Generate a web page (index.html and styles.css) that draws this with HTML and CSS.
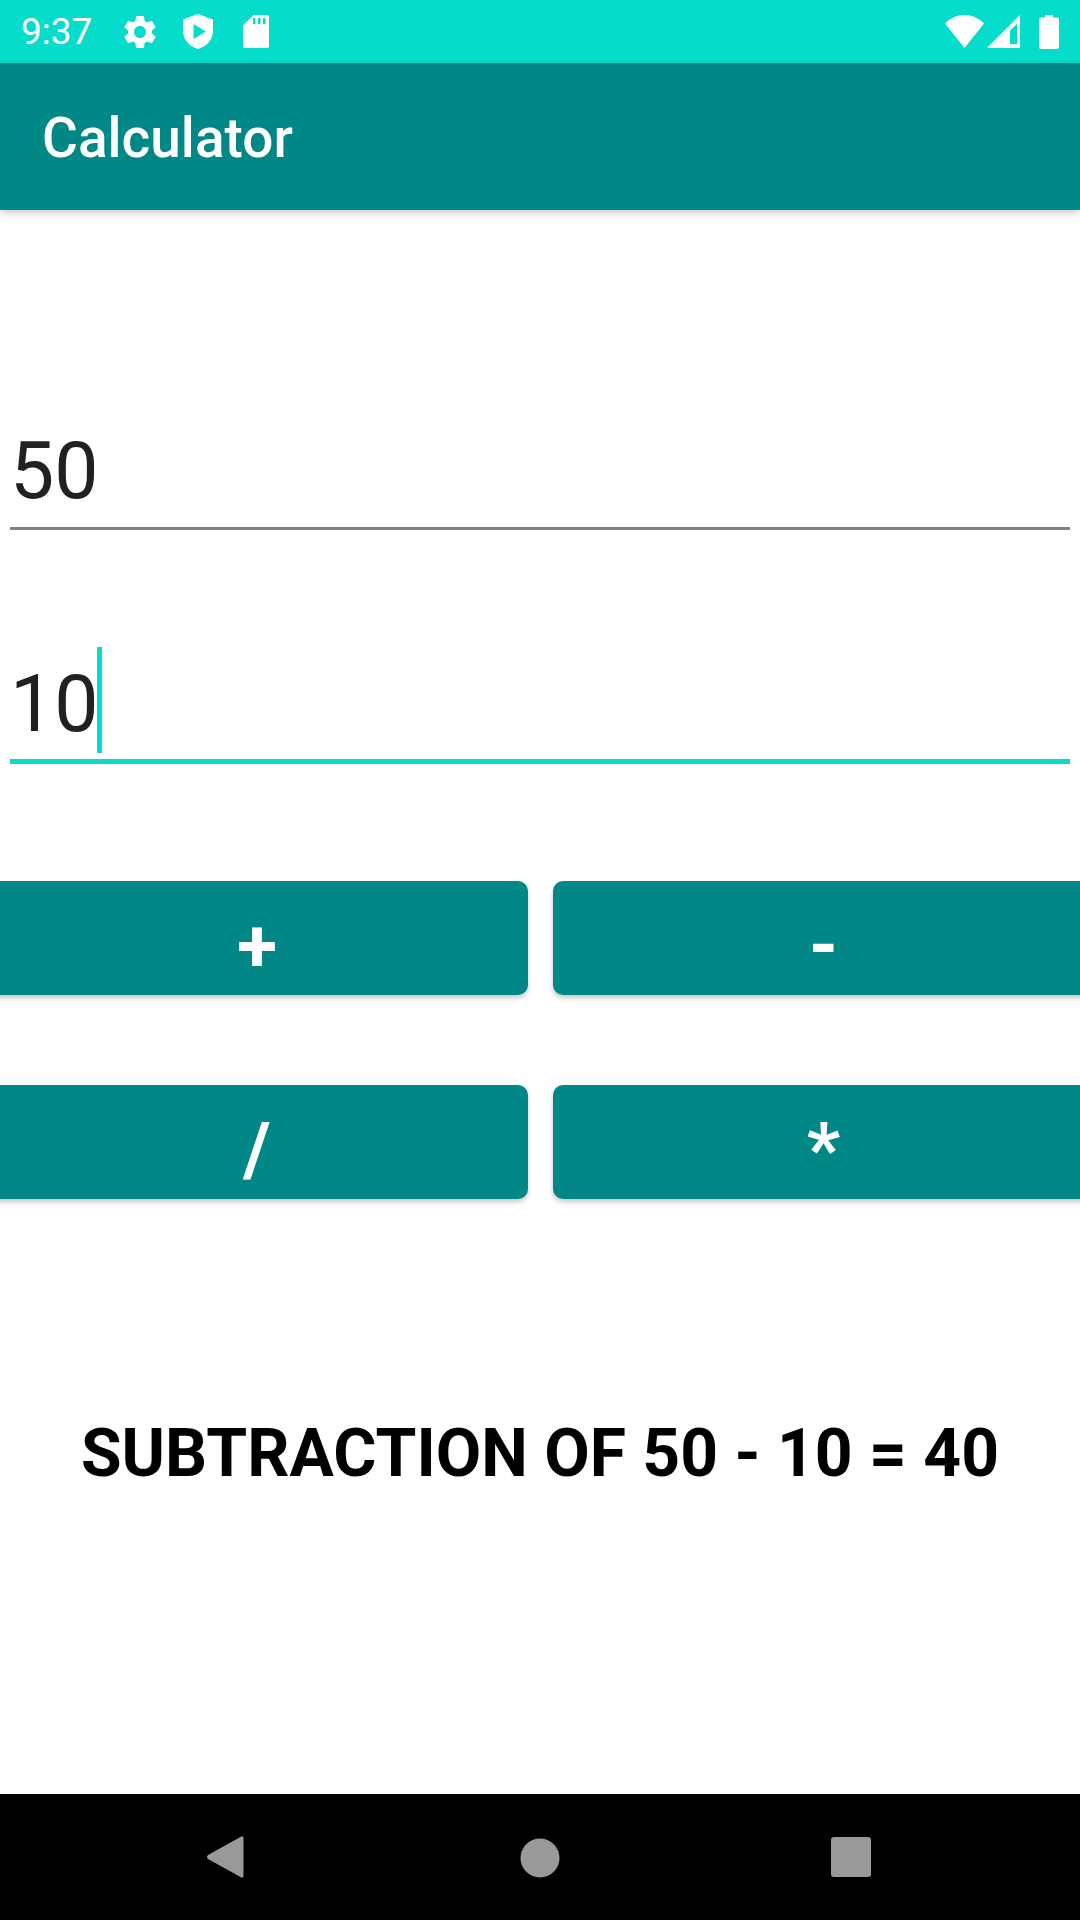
FILE: index.html
```html
<!DOCTYPE html>
<html>
<head>
<meta charset="utf-8">
<title>Calculator</title>
<link rel="stylesheet" href="styles.css">
</head>
<body>
<div class="status-bar">
  <span class="clock">9:37</span>
  <svg class="ic ic-gear" viewBox="0 0 24 24"><path d="M19.14 12.94c.04-.3.06-.61.06-.94 0-.32-.02-.64-.07-.94l2.03-1.58a.49.49 0 0 0 .12-.61l-1.92-3.32a.488.488 0 0 0-.59-.22l-2.39.96c-.5-.38-1.03-.7-1.62-.94l-.36-2.54a.484.484 0 0 0-.48-.41h-3.84c-.24 0-.43.17-.47.41l-.36 2.54c-.59.24-1.13.57-1.62.94l-2.39-.96c-.22-.08-.47 0-.59.22L2.74 8.87c-.12.21-.08.47.12.61l2.03 1.58c-.05.3-.09.63-.09.94s.02.64.07.94l-2.03 1.58a.49.49 0 0 0-.12.61l1.92 3.32c.12.22.37.29.59.22l2.39-.96c.5.38 1.03.7 1.62.94l.36 2.54c.05.24.24.41.48.41h3.84c.24 0 .44-.17.47-.41l.36-2.54c.59-.24 1.13-.56 1.62-.94l2.39.96c.22.08.47 0 .59-.22l1.92-3.32c.12-.22.07-.47-.12-.61l-2.01-1.58zM12 15.6c-1.98 0-3.6-1.62-3.6-3.6s1.62-3.6 3.6-3.6 3.6 1.62 3.6 3.6-1.62 3.6-3.6 3.6z"/></svg>
  <svg class="ic ic-shield" viewBox="0 0 30 35"><path fill-rule="evenodd" d="M15 0 30 5.500V17c0 8.500-6.200 15.500-15 18C6.200 32.500 0 25.500 0 17V5.500zM10.500 10v15L23 17.500z"/></svg>
  <svg class="ic ic-sd" viewBox="0 0 26 33"><path fill-rule="evenodd" d="M10.500 0H24a2 2 0 0 1 2 2v29a2 2 0 0 1-2 2H2a2 2 0 0 1-2-2V10.500zM10 3v6h2.500V3zM15 3v6h2.500V3zM20 3v6h2.500V3z"/></svg>
  <span class="spacer"></span>
  <svg class="ic ic-wifi" viewBox="0 0 39 33"><path d="M19.500 33 0 8.500C5.500 3 12 0 19.500 0S33.500 3 39 8.500z"/></svg>
  <svg class="ic ic-signal" viewBox="0 0 33 33"><path fill-rule="evenodd" d="M33 0v33H0zM30 29V9L23 15.500V29z"/></svg>
  <svg class="ic ic-battery" viewBox="0 0 20 34"><path d="M6 0h8v2.500h4a2 2 0 0 1 2 2V32a2 2 0 0 1-2 2H2a2 2 0 0 1-2-2V4.500a2 2 0 0 1 2-2h4z"/></svg>
</div>
<div class="app-bar">Calculator</div>

<div class="content">
  <div class="field field-first">50</div>
  <div class="field field-focus">10<span class="caret"></span></div>

  <div class="btn-grid">
    <div class="btn">+</div>
    <div class="btn">-</div>
    <div class="btn">/</div>
    <div class="btn">*</div>
  </div>

  <div class="result">SUBTRACTION OF 50 - 10 = 40</div>
</div>

<div class="nav-bar">
  <svg class="nav-ic nav-back" viewBox="0 0 37 42"><path d="M36.500 2.500v37c0 2-1.500 2.800-3 1.600L1 23c-1.300-1-1.300-3 0-4L33.500.9c1.500-1.200 3-.4 3 1.600z"/></svg>
  <svg class="nav-ic nav-home" viewBox="0 0 40 40"><circle cx="20" cy="20" r="19.500"/></svg>
  <svg class="nav-ic nav-recent" viewBox="0 0 40 40"><rect width="40" height="40" rx="3"/></svg>
</div>
</body>
</html>
```

FILE: styles.css
```css
html, body {margin: 0; padding: 0;}
body {width: 1080px; height: 1920px; overflow: hidden; display: flex; flex-direction: column; background: #fff; font-family: Roboto, sans-serif;}

.status-bar {height: 63px; flex: none; display: flex; align-items: center; padding: 0 21px; background: #05dccb; color: #fff;}
.clock {font-size: 37px; width: 99px;}
.spacer {flex: 1;}
.ic {display: block; fill: #fff;}
.ic-gear {width: 40px; height: 40px; margin-right: 23px;}
.ic-shield {width: 30px; height: 35px; margin-right: 30px;}
.ic-sd {width: 26px; height: 33px;}
.ic-wifi {width: 39px; height: 33px; margin-right: 3px;}
.ic-signal {width: 33px; height: 33px; margin-right: 19px;}
.ic-battery {width: 20px; height: 34px;}

.app-bar {height: 147px; flex: none; box-sizing: border-box; padding-left: 42px; line-height: 151px; background: #008786; color: #fff; font-size: 55px; font-weight: 500; box-shadow: 0 3px 8px rgba(0,0,0,.2); position: relative;}

.content {flex: 1; min-height: 0;}
.field {position: relative; margin: 0 10px; height: 106px; line-height: 100px; font-size: 78.75px; color: #212121; border-bottom: 3px solid #808080;}
.field-first {margin-top: 211px;}
.field-focus {margin-top: 117px; border-bottom: 5px solid #05dccb; height: 112px; line-height: 114px;}
.caret {position: absolute; left: 87px; top: 0; width: 5px; height: 106px; background: #05dccb;}

.btn-grid {display: grid; grid-template-columns: 542px 541px; column-gap: 25px; row-gap: 90px; margin: 117px 0 0 -14px;}
.btn {height: 114px; line-height: 130px; text-align: center; background: #008786; color: #fff; font-size: 73.5px; font-weight: 700; border-radius: 10px; box-shadow: 0 3px 5px rgba(0,0,0,.22);}

.result {margin-top: 216px; text-align: center; font-size: 66px; font-weight: 700; color: #000;}

.nav-bar {height: 126px; flex: none; position: relative; background: #000;}
.nav-ic {position: absolute; fill: #999;}
.nav-back {left: 207px; top: 42px; width: 37px; height: 42px;}
.nav-home {left: 520px; top: 44px; width: 40px; height: 40px;}
.nav-recent {left: 831px; top: 43px; width: 40px; height: 40px;}
```
